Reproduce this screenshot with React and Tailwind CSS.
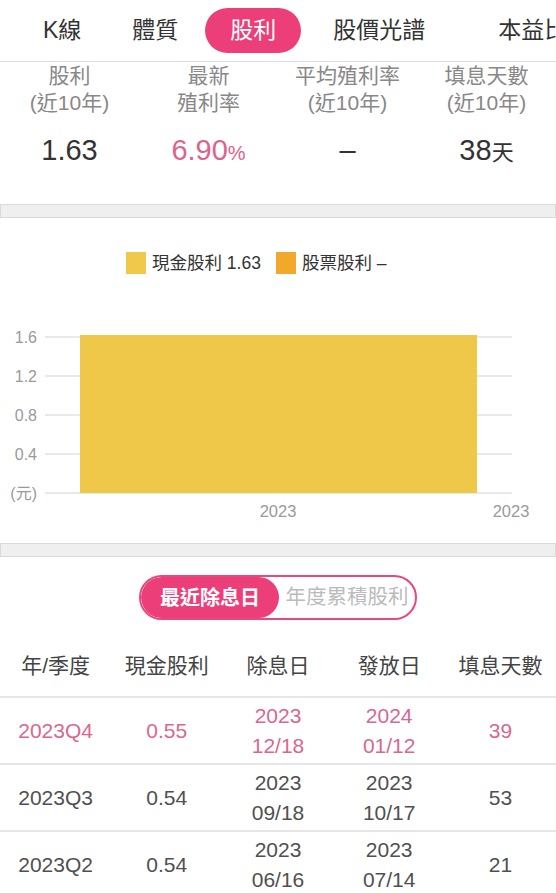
const font = { fontFamily: '"Liberation Sans", "Noto Sans CJK TC", sans-serif' }

const stats = [
  { l1: '股利', l2: '(近10年)', v: <span>1.63</span> },
  { l1: '最新', l2: '殖利率', v: <span className="text-[#e0628c]">6.90<span className="text-[20px]">%</span></span> },
  { l1: '平均殖利率', l2: '(近10年)', v: <span>–</span> },
  { l1: '填息天數', l2: '(近10年)', v: <span>38<span className="text-[22px]">天</span></span> },
]

const rows = [
  { q: '2023Q4', cash: '0.55', ex: ['2023', '12/18'], pay: ['2024', '01/12'], days: '39', hot: true },
  { q: '2023Q3', cash: '0.54', ex: ['2023', '09/18'], pay: ['2023', '10/17'], days: '53' },
  { q: '2023Q2', cash: '0.54', ex: ['2023', '06/16'], pay: ['2023', '07/14'], days: '21' },
]

function Chart() {
  const grid = [
    { y: 119, t: '1.6' },
    { y: 158, t: '1.2' },
    { y: 197, t: '0.8' },
    { y: 236, t: '0.4' },
    { y: 275, t: '(元)' },
  ]
  return (
    <svg width="556" height="325" className="block">
      <rect x="126" y="34" width="20" height="22" fill="#f0c94a" />
      <text x="152" y="51" fontSize="17.5" fill="#333">現金股利 1.63</text>
      <rect x="276" y="34" width="20" height="22" fill="#f2a92b" />
      <text x="302" y="51" fontSize="17.5" fill="#333">股票股利 –</text>
      {grid.map((g) => (
        <g key={g.t}>
          <line x1="45" x2="512" y1={g.y} y2={g.y} stroke="#e2e2e2" strokeWidth="1.5" />
          <text x="37" y={g.y + 6} fontSize="16" fill="#9a9a9a" textAnchor="end">{g.t}</text>
        </g>
      ))}
      <rect x="80" y="117" width="397" height="158" fill="#efc84a" />
      <text x="278" y="299" fontSize="16.5" fill="#9a9a9a" textAnchor="middle">2023</text>
      <text x="511" y="299" fontSize="16.5" fill="#9a9a9a" textAnchor="middle">2023</text>
    </svg>
  )
}

export default function App() {
  return (
    <div className="w-[556px] h-[893px] overflow-hidden bg-white text-[#333]" style={font}>
      {/* tabs */}
      <div className="h-[62px] flex items-center pl-[43px] border-b border-[#dcdcdc] whitespace-nowrap text-[23px]">
        <span>K線</span>
        <span className="ml-[51px]">體質</span>
        <span className="ml-[27px] h-[45px] px-[25px] flex items-center rounded-full bg-[#ec3f7a] text-white">股利</span>
        <span className="ml-[32px]">股價光譜</span>
        <span className="ml-[73px]">本益比</span>
      </div>

      {/* stats */}
      <div className="h-[142px] grid grid-cols-4 text-center">
        {stats.map((s) => (
          <div key={s.l1} className="flex flex-col items-center">
            <div className="text-[21px] leading-[27px] text-[#888]">{s.l1}</div>
            <div className="text-[21px] leading-[27px] text-[#888]">{s.l2}</div>
            <div className="mt-[16px] text-[29px] leading-[36px] text-[#333]">{s.v}</div>
          </div>
        ))}
      </div>

      <div className="h-[14px] bg-[#efefef] border border-[#dadada]" />

      <Chart />

      <div className="h-[14px] bg-[#efefef] border border-[#dadada]" />

      {/* toggle */}
      <div className="pt-[18px] flex justify-center">
        <div className="w-[278px] h-[45px] rounded-full border-2 border-[#e8487f] flex items-center overflow-hidden">
          <div className="w-[138px] h-full rounded-full bg-[#ec3f7a] text-white font-bold text-[20px] flex items-center justify-center">最近除息日</div>
          <div className="flex-1 text-center text-[20.5px] text-[#bbb]">年度累積股利</div>
        </div>
      </div>

      {/* table header */}
      <div className="grid grid-cols-5 text-center text-[21px] text-[#444] leading-[30px] pt-[31px] pb-[15px] border-b-2 border-[#e6e6e6]">
        <div>年/季度</div>
        <div>現金股利</div>
        <div>除息日</div>
        <div>發放日</div>
        <div>填息天數</div>
      </div>

      {rows.map((r) => (
        <div
          key={r.q}
          className={
            'grid grid-cols-5 items-center text-center text-[21px] leading-[30px] h-[67px] border-b-2 border-[#e6e6e6] ' +
            (r.hot ? 'text-[#d9678f]' : 'text-[#505050]')
          }
        >
          <div>{r.q}</div>
          <div>{r.cash}</div>
          <div>
            <div>{r.ex[0]}</div>
            <div>{r.ex[1]}</div>
          </div>
          <div>
            <div>{r.pay[0]}</div>
            <div>{r.pay[1]}</div>
          </div>
          <div>{r.days}</div>
        </div>
      ))}
    </div>
  )
}
